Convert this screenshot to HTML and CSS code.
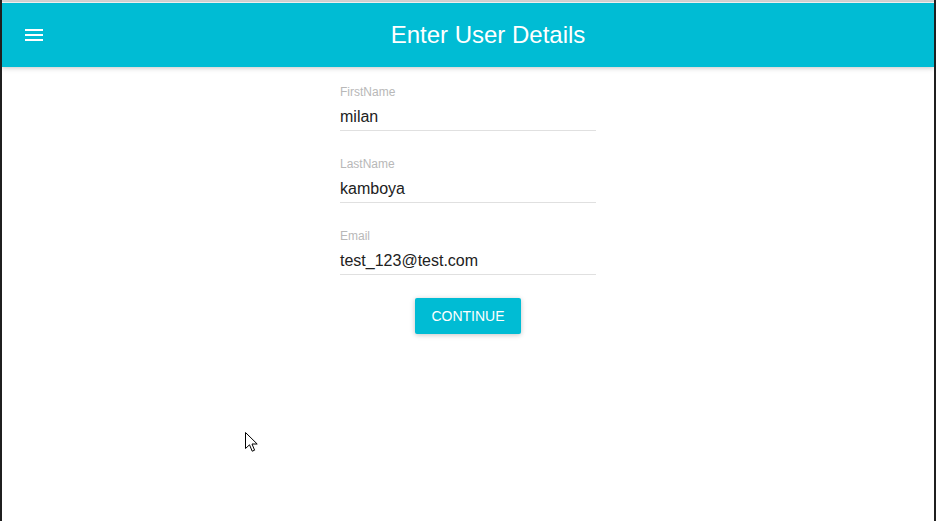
FILE: index.html
```html
<!DOCTYPE html>
<html>
<head>
<meta charset="utf-8">
<link rel="stylesheet" href="styles.css">
</head>
<body>
<div class="frame">
  <div class="topline"></div>
  <header class="appbar">
    <button class="menu-btn" aria-label="menu">
      <svg width="24" height="24" viewBox="0 0 24 24"><path fill="#fff" d="M3 18h18v-2H3v2zm0-5h18v-2H3v2zm0-7v2h18V6H3z"/></svg>
    </button>
    <h1 class="title">Enter User Details</h1>
  </header>
  <main class="content">
    <form class="form">
      <div class="field">
        <label class="label">FirstName</label>
        <div class="value">milan</div>
        <div class="underline"></div>
      </div>
      <div class="field">
        <label class="label">LastName</label>
        <div class="value">kamboya</div>
        <div class="underline"></div>
      </div>
      <div class="field">
        <label class="label">Email</label>
        <div class="value">test_123@test.com</div>
        <div class="underline"></div>
      </div>
      <button type="button" class="btn">CONTINUE</button>
    </form>
  </main>
  <svg class="cursor" width="13" height="21" viewBox="0 0 13 21"><path d="M0.5 0.5 L0.5 16.5 L4.5 12.8 L7.2 19.2 L9.6 18.2 L7 12 L12.2 12 Z" fill="#fff" stroke="#000" stroke-width="1" stroke-linejoin="miter"/></svg>
</div>
</body>
</html>
```
FILE: styles.css
```css
html, body {
  margin: 0;
  padding: 0;
  height: 100%;
  background: #fff;
}
body {
  font-family: "Liberation Sans", Arial, sans-serif;
}
.frame {
  position: relative;
  height: 521px;
  box-sizing: border-box;
  border-left: 2px solid #1f1f1f;
  border-right: 2px solid #1f1f1f;
  overflow: hidden;
}
.topline {
  height: 2px;
  background: #d6d6d6;
  border-bottom: 1px solid #fff;
}
.appbar {
  height: 64px;
  background: #00bcd4;
  display: flex;
  align-items: center;
  padding: 0 24px 0 8px;
  box-shadow: 0 1px 6px rgba(0,0,0,0.12), 0 1px 4px rgba(0,0,0,0.12);
  position: relative;
  z-index: 1;
}
.menu-btn {
  width: 48px;
  height: 48px;
  border: 0;
  padding: 0;
  background: transparent;
  display: flex;
  align-items: center;
  justify-content: center;
}
.title {
  flex: 1;
  margin: 0 0 0 8px;
  color: #fff;
  font-weight: 400;
  font-size: 24px;
  line-height: 64px;
  text-align: center;
}
.content {
  display: flex;
  justify-content: center;
}
.form {
  width: 256px;
  display: flex;
  flex-direction: column;
  align-items: center;
  padding-top: 18px;
}
.field {
  width: 256px;
  height: 72px;
  display: flex;
  flex-direction: column;
}
.label {
  font-size: 12px;
  line-height: 14px;
  color: #b8b8b8;
  height: 14px;
}
.value {
  font-size: 16px;
  line-height: 20px;
  color: #212121;
  margin-top: 8px;
  height: 20px;
}
.underline {
  margin-top: 3px;
  height: 1px;
  background: #e0e0e0;
}
.btn {
  margin-top: -3px;
  width: 106px;
  height: 36px;
  border: 0;
  border-radius: 2px;
  background: #00bcd4;
  color: #fff;
  font-family: "Liberation Sans", Arial, sans-serif;
  font-size: 14px;
  padding: 0;
  box-shadow: 0 1px 6px rgba(0,0,0,0.12), 0 1px 4px rgba(0,0,0,0.12);
}
.cursor {
  position: absolute;
  left: 243px;
  top: 432px;
}
```
